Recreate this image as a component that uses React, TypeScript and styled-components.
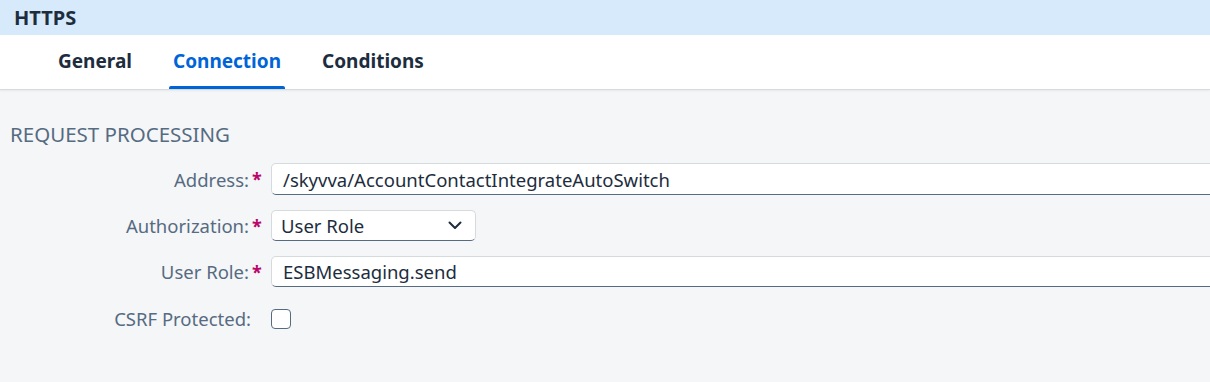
import React from "react";
import styled, { createGlobalStyle } from "styled-components";

const Global = createGlobalStyle`
  html, body { margin: 0; padding: 0; overflow: hidden; }
  body {
    background: #f5f6f7;
    font-family: "Noto Sans", "Liberation Sans", sans-serif;
    width: 1210px;
    height: 382px;
  }
  * { box-sizing: border-box; }
`;

const Page = styled.div`
  width: 1210px;
  height: 382px;
  display: flex;
  flex-direction: column;
  background: #f5f6f7;
  overflow: hidden;
`;

const TitleBar = styled.div`
  height: 35px;
  background: #d7eafc;
  display: flex;
  align-items: center;
  padding-left: 14px;
  font-size: 20px;
  font-weight: 700;
  color: #1d2d3e;
`;

const TabBar = styled.div`
  height: 54px;
  background: #ffffff;
  display: flex;
  align-items: stretch;
  gap: 33px;
  padding-left: 54px;
  box-shadow: 0 1px 0 #d9dadb, 0 2px 2px rgba(0, 0, 0, 0.06);
  position: relative;
  z-index: 1;
`;

const Tab = styled.div<{ $active?: boolean }>`
  position: relative;
  display: flex;
  align-items: center;
  padding: 0 4px 3px;
  font-size: 19px;
  font-weight: 700;
  color: ${(p) => (p.$active ? "#0064d9" : "#1d2d3e")};
  &::after {
    content: "";
    display: ${(p) => (p.$active ? "block" : "none")};
    position: absolute;
    left: 0;
    right: 0;
    bottom: 0;
    height: 3px;
    background: #0064d9;
    border-radius: 2px 2px 0 0;
  }
`;

const Content = styled.div`
  padding: 33px 0 0 10px;
`;

const SectionTitle = styled.div`
  font-size: 20.5px;
  line-height: 24px;
  color: #556b82;
`;

const Form = styled.div`
  margin-top: 17px;
  display: grid;
  grid-template-columns: 252px 1000px;
  column-gap: 9px;
  row-gap: 15px;
`;

const Label = styled.div`
  display: flex;
  align-items: center;
  justify-content: flex-end;
  font-size: 18.5px;
  color: #556b82;
`;

const Required = styled.span<{ $show?: boolean }>`
  display: inline-block;
  width: ${(p) => (p.$show ? 13 : 11)}px;
  padding-left: 3px;
  color: #ba066c;
  font-weight: 700;
  font-size: 18px;
  visibility: ${(p) => (p.$show ? "visible" : "hidden")};
`;

const Input = styled.div<{ $h?: number }>`
  height: ${(p) => p.$h ?? 31}px;
  background: #ffffff;
  border: 1px solid #d5dadd;
  border-bottom-color: #556b82;
  border-radius: 5px;
  display: flex;
  align-items: center;
  padding-left: 11px;
  font-size: 18.5px;
  color: #1d2d3e;
`;

const Select = styled(Input)`
  width: 205px;
  justify-content: space-between;
  padding-right: 13px;
  padding-left: 9px;
`;

const CheckCell = styled.div`
  height: 33px;
  display: flex;
  align-items: center;
`;

const Checkbox = styled.div`
  width: 20px;
  height: 20px;
  border: 1px solid #556b82;
  border-radius: 4px;
  background: #ffffff;
`;

const Chevron = () => (
  <svg width="14" height="9" viewBox="0 0 14 9" fill="none">
    <path d="M1.5 1.5 L7 7 L12.5 1.5" stroke="#1d2d3e" strokeWidth="2" strokeLinecap="round" strokeLinejoin="round" />
  </svg>
);

export default function App() {
  return (
    <Page>
      <Global />
      <TitleBar>HTTPS</TitleBar>
      <TabBar>
        <Tab>General</Tab>
        <Tab $active>Connection</Tab>
        <Tab>Conditions</Tab>
      </TabBar>
      <Content>
        <SectionTitle>REQUEST PROCESSING</SectionTitle>
        <Form>
          <Label>
            Address:<Required $show>*</Required>
          </Label>
          <Input $h={32}>/skyvva/AccountContactIntegrateAutoSwitch</Input>
          <Label>
            Authorization:<Required $show>*</Required>
          </Label>
          <div>
            <Select>
              User Role
              <Chevron />
            </Select>
          </div>
          <Label>
            User Role:<Required $show>*</Required>
          </Label>
          <Input>ESBMessaging.send</Input>
          <Label>
            CSRF Protected:<Required>*</Required>
          </Label>
          <CheckCell>
            <Checkbox />
          </CheckCell>
        </Form>
      </Content>
    </Page>
  );
}
